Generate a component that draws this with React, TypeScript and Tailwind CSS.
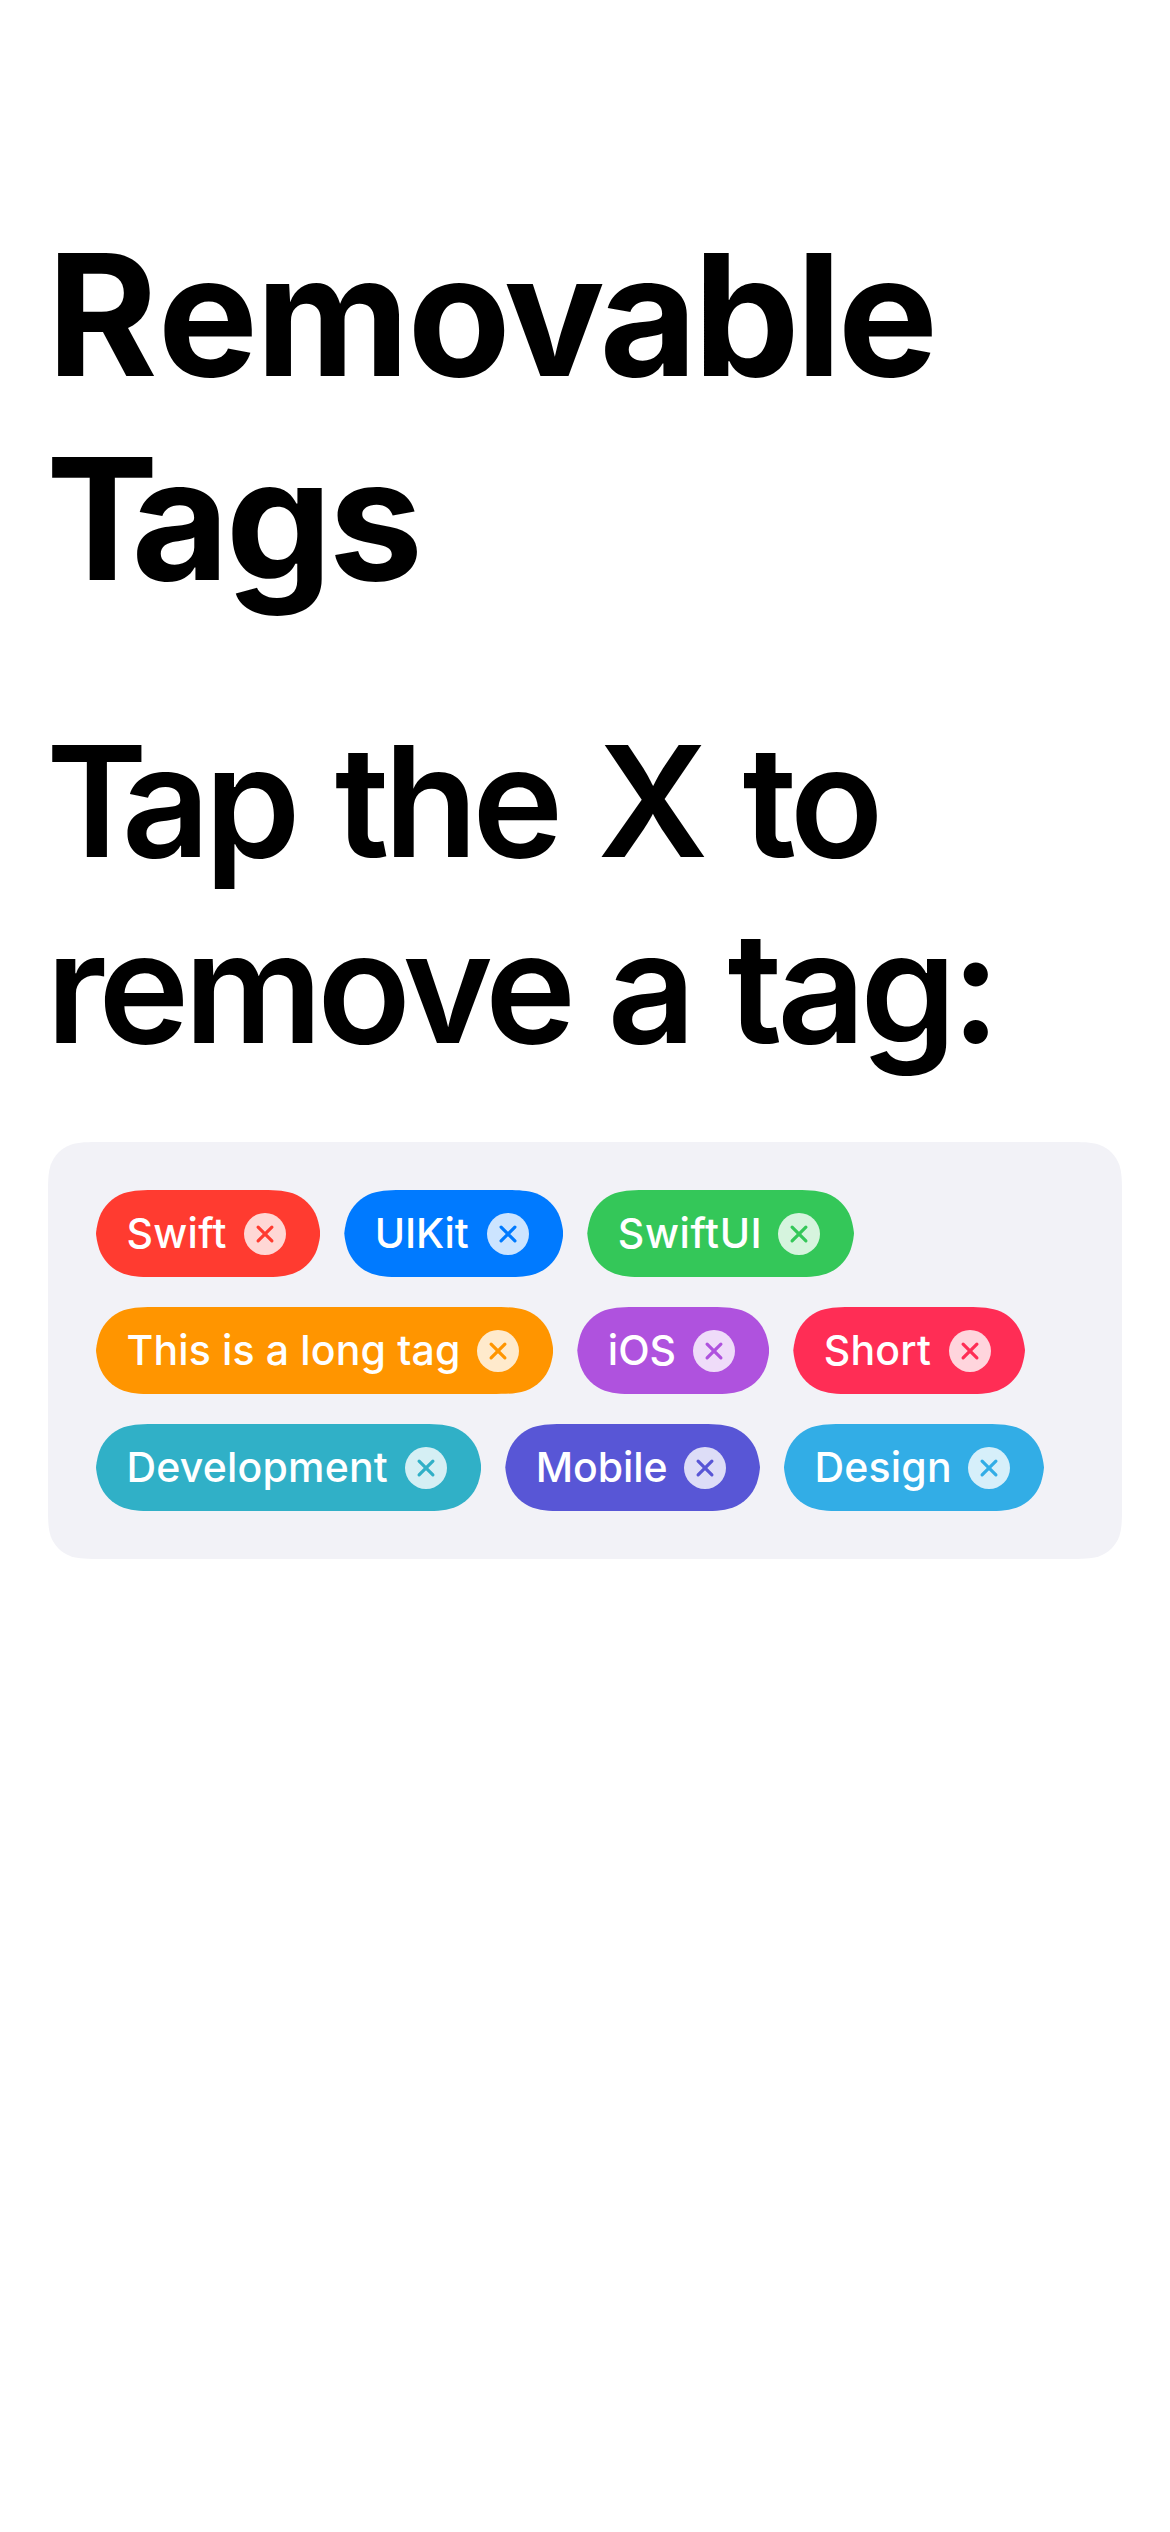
import { useState } from "react";

type Tag = {
  label: string;
  color: string;
  tracking: string;
  width: number;
};

const CHIP_HEIGHT = 87;

const initialRows: Tag[][] = [
  [
    { label: "Swift", color: "bg-[#ff3b30]", tracking: "tracking-[0.3px]", width: 224.3 },
    { label: "UIKit", color: "bg-[#007aff]", tracking: "tracking-[-0.15px]", width: 219 },
    { label: "SwiftUI", color: "bg-[#34c759]", tracking: "tracking-[0.6px]", width: 266.7 },
  ],
  [
    { label: "This is a long tag", color: "bg-[#ff9500]", tracking: "tracking-[0.15px]", width: 457.3 },
    { label: "iOS", color: "bg-[#af52de]", tracking: "tracking-normal", width: 192 },
    { label: "Short", color: "bg-[#ff2d55]", tracking: "tracking-[0.2px]", width: 231.7 },
  ],
  [
    { label: "Development", color: "bg-[#30b0c7]", tracking: "tracking-[0.2px]", width: 385.3 },
    { label: "Mobile", color: "bg-[#5856d6]", tracking: "tracking-[-0.1px]", width: 254.7 },
    { label: "Design", color: "bg-[#32ade6]", tracking: "tracking-[0.2px]", width: 260 },
  ],
];

/** Capsule with smooth (continuous) corners, slightly pointed at both ends. */
function capsulePath(w: number, h: number) {
  const m = h / 2;
  return [
    `M0 ${m}`,
    `C0.3 40 1.2 34 3.3 27.5`,
    `C7.4 16.2 16.2 7.4 27.5 3.3`,
    `C37.8 0 47.3 0 62 0`,
    `L${w - 62} 0`,
    `C${w - 47.3} 0 ${w - 37.8} 0 ${w - 27.5} 3.3`,
    `C${w - 16.2} 7.4 ${w - 7.4} 16.2 ${w - 3.3} 27.5`,
    `C${w - 1.2} 34 ${w - 0.3} 40 ${w} ${m}`,
    `C${w - 0.3} ${h - 40} ${w - 1.2} ${h - 34} ${w - 3.3} ${h - 27.5}`,
    `C${w - 7.4} ${h - 16.2} ${w - 16.2} ${h - 7.4} ${w - 27.5} ${h - 3.3}`,
    `C${w - 37.8} ${h} ${w - 47.3} ${h} ${w - 62} ${h}`,
    `L62 ${h}`,
    `C47.3 ${h} 37.8 ${h} 27.5 ${h - 3.3}`,
    `C16.2 ${h - 7.4} 7.4 ${h - 16.2} 3.3 ${h - 27.5}`,
    `C1.2 ${h - 34} 0.3 ${h - 40} 0 ${m}Z`,
  ].join(" ");
}

/** Rounded rectangle with smooth (continuous) corners of radius r. */
function smoothRectPath(w: number, h: number, r: number) {
  const a = 1.528665 * r;
  const b = 1.088493 * r;
  const c = 0.868407 * r;
  const d = 0.631494 * r;
  const e = 0.372824 * r;
  const f = 0.16906 * r;
  const g = 0.074911 * r;
  return [
    `M${a} 0 L${w - a} 0`,
    `C${w - b} 0 ${w - c} 0 ${w - d} ${g}`,
    `C${w - e} ${f} ${w - f} ${e} ${w - g} ${d}`,
    `C${w} ${c} ${w} ${b} ${w} ${a}`,
    `L${w} ${h - a}`,
    `C${w} ${h - b} ${w} ${h - c} ${w - g} ${h - d}`,
    `C${w - f} ${h - e} ${w - e} ${h - f} ${w - d} ${h - g}`,
    `C${w - c} ${h} ${w - b} ${h} ${w - a} ${h}`,
    `L${a} ${h}`,
    `C${b} ${h} ${c} ${h} ${d} ${h - g}`,
    `C${e} ${h - f} ${f} ${h - e} ${g} ${h - d}`,
    `C0 ${h - c} 0 ${h - b} 0 ${h - a}`,
    `L0 ${a}`,
    `C0 ${b} 0 ${c} ${g} ${d}`,
    `C${f} ${e} ${e} ${f} ${d} ${g}`,
    `C${c} 0 ${b} 0 ${a} 0Z`,
  ].join(" ");
}

function RemoveIcon({ id }: { id: string }) {
  return (
    <svg viewBox="0 0 42 42" className="size-[42px]" aria-hidden="true">
      <mask id={id}>
        <rect width="42" height="42" fill="#fff" />
        <path
          d="M14.1 14.1L27.9 27.9M27.9 14.1L14.1 27.9"
          stroke="#000"
          strokeWidth="3.2"
          strokeLinecap="round"
        />
      </mask>
      <circle cx="21" cy="21" r="21" fill="#fff" fillOpacity="0.8" mask={`url(#${id})`} />
    </svg>
  );
}

function Chip({ tag, onRemove }: { tag: Tag; onRemove: () => void }) {
  return (
    <div
      className={`flex h-[87px] shrink-0 items-center justify-between pl-[30.5px] pr-[34px] ${tag.color}`}
      style={{ width: tag.width, clipPath: `path("${capsulePath(tag.width, CHIP_HEIGHT)}")` }}
    >
      <span
        className={`-mt-px whitespace-nowrap text-[41px] leading-[50px] font-medium text-white ${tag.tracking}`}
      >
        {tag.label}
      </span>
      <button type="button" aria-label={`Remove ${tag.label}`} onClick={onRemove} className="mt-px block">
        <RemoveIcon id={`cross-${tag.label.replace(/ /g, "-")}`} />
      </button>
    </div>
  );
}

export default function App() {
  const [rows, setRows] = useState(initialRows);
  const remove = (label: string) =>
    setRows((current) =>
      current.map((row) => row.filter((t) => t.label !== label)).filter((row) => row.length > 0),
    );
  const panelHeight = 96 + rows.length * CHIP_HEIGHT + Math.max(rows.length - 1, 0) * 30;

  return (
    <main className="min-h-screen w-full bg-white px-[48px] pt-[213px] font-['Inter',sans-serif] text-black">
      <h1 className="-ml-[1px] text-[168.5px] leading-[204px] font-bold">
        <span className="block tracking-[-3.8px]">
          <span className="tracking-[0px]">R</span>
          <span className="tracking-[-2.2px]">em</span>ovable
        </span>
        <span className="-ml-[1px] block tracking-[-3.5px]">
          <span className="tracking-[-27px]">T</span>ags
        </span>
      </h1>
      <h2 className="mt-[87px] -ml-[2px] text-[154px] leading-[186px] font-semibold whitespace-nowrap">
        <span className="block tracking-[-5.7px] [word-spacing:6.8px]">
          <span className="tracking-[-26px]">T</span>ap the X to
        </span>
        <span className="block tracking-[-5.4px] [word-spacing:3.6px]">remove a tag:</span>
      </h2>
      <section
        className="mt-[62px] flex w-[1074px] flex-col gap-[30px] bg-[#f2f2f7] p-[48px]"
        style={{ height: panelHeight, clipPath: `path("${smoothRectPath(1074, panelHeight, 36)}")` }}
      >
        {rows.map((row) => (
          <div key={row[0].label} className="flex gap-6">
            {row.map((tag) => (
              <Chip key={tag.label} tag={tag} onRemove={() => remove(tag.label)} />
            ))}
          </div>
        ))}
      </section>
    </main>
  );
}
